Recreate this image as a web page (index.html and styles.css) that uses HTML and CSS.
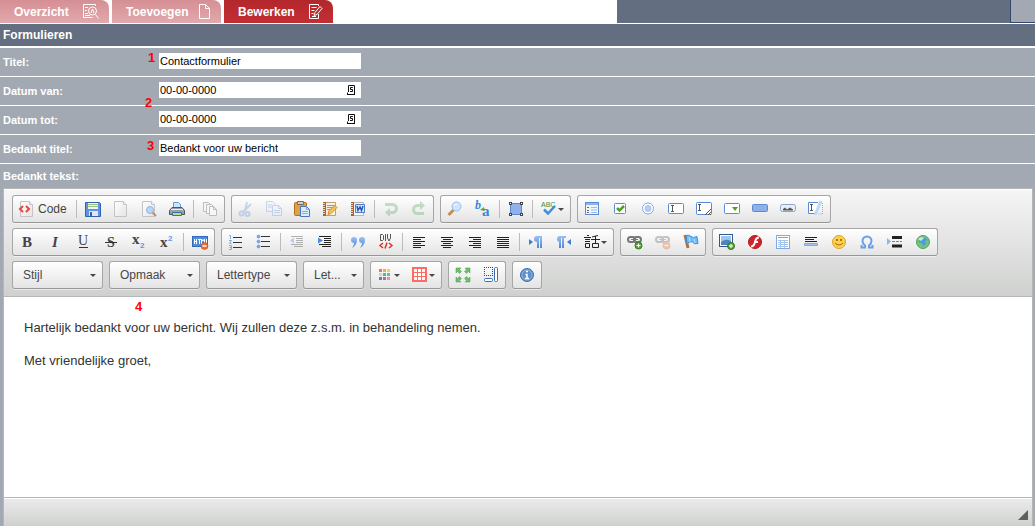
FILE: index.html
```html
<!DOCTYPE html>
<html lang="nl">
<head>
<meta charset="utf-8">
<title>Formulieren</title>
<link rel="stylesheet" href="styles.css">
</head>
<body>
<svg class="defs" aria-hidden="true">
  <defs>
    <linearGradient id="blue" x1="0" y1="0" x2="0" y2="1"><stop offset="0" stop-color="#9cc0f2"/><stop offset="1" stop-color="#4f86d9"/></linearGradient>
    <linearGradient id="paper" x1="0" y1="0" x2="1" y2="1"><stop offset="0" stop-color="#fff"/><stop offset="1" stop-color="#e4e4e4"/></linearGradient>
    <g id="sheet"><path d="M1.500.5h9l3 3v12h-12z" fill="url(#paper)" stroke="#c4c4c4"/><path d="M10.500.5v3h3" fill="#f4f4f4" stroke="#c4c4c4"/></g>
    <g id="chain" fill="none" stroke-width="2"><rect x="1" y="3" width="7" height="5" rx="2.500"/><rect x="7" y="3" width="7" height="5" rx="2.500"/><path d="M4 5.500h7" stroke-width="1"/></g>
  </defs>
</svg>

<header class="topbar">
  <nav class="tabs">
    <a class="tab" href="#overzicht">Overzicht
      <svg width="16" height="16" viewBox="0 0 16 16" fill="none" stroke="#fff"><path d="M12.500 2V.500h-12v13h9M2 3.500h3M2 6.500h2M2 9.500h3M2 11.500h5"/><circle cx="9.500" cy="7" r="4"/><path d="M8 9l1.500-4L11 9M12.500 10.500l3 4"/></svg>
    </a>
    <a class="tab" href="#toevoegen">Toevoegen
      <svg width="13" height="16" viewBox="0 0 13 16" fill="none" stroke="#fff"><path d="M1.500.5h6l4 4v10h-10zM7.500.5v4h4"/></svg>
    </a>
    <a class="tab active" href="#bewerken" aria-current="page">Bewerken
      <svg width="14" height="16" viewBox="0 0 14 16" fill="none" stroke="#fff"><path d="M9.500 2V.500h-9v14h9V10M2.500 3.500h5M2.500 6.500h3M2.500 9.500h2M5 11.500l1-3 5-6 2 2-5 6zM3 12.500h4"/></svg>
    </a>
  </nav>
  <div class="topfill"></div>
  <div class="topbox"></div>
</header>

<main>
  <h1 class="heading">Formulieren</h1>
  <div class="row">
    <label for="titel">Titel:</label>
    <div class="field"><input id="titel" type="text" value="Contactformulier"></div>
  </div>
  <div class="row">
    <label for="van">Datum van:</label>
    <div class="field"><input id="van" type="text" value="00-00-0000">
      <button class="cal" type="button" aria-label="Kies datum van"><svg width="9" height="10" viewBox="0 0 9 10" fill="none" stroke="#111"><path d="M1.500 7V.500h6v9M0 9.500h8M.5 7.500v2M5.800 2.500H3.500v2h2v2H3" /></svg></button></div>
  </div>
  <div class="row">
    <label for="tot">Datum tot:</label>
    <div class="field"><input id="tot" type="text" value="00-00-0000">
      <button class="cal" type="button" aria-label="Kies datum tot"><svg width="9" height="10" viewBox="0 0 9 10" fill="none" stroke="#111"><path d="M1.500 7V.500h6v9M0 9.500h8M.5 7.500v2M5.800 2.500H3.500v2h2v2H3" /></svg></button></div>
  </div>
  <div class="row">
    <label for="btitel">Bedankt titel:</label>
    <div class="field"><input id="btitel" type="text" value="Bedankt voor uw bericht"></div>
  </div>
  <div class="row last"><span id="btekst">Bedankt tekst:</span></div>

  <section class="editor-wrap">
    <div class="editor">
      <div class="toolbar" role="toolbar" aria-label="Werkbalk">
        <div class="line">
          <div class="group">
            <button class="tool code"><svg class="i" viewBox="0 0 16 16"><use href="#sheet"/><path d="M4 5L1 8l3 3M7 5l3 3-3 3" fill="none" stroke="#e8453c" stroke-width="2"/></svg>Code</button>
            <i class="sep"></i>
            <button class="tool" aria-label="Opslaan"><svg class="i" viewBox="0 0 16 16"><path d="M.5 1.500h14l1 1v13H.500z" fill="#5f93e0" stroke="#2f62b4"/><path d="M3 2h10v6H3z" fill="#eef4fc"/><path d="M3 3.500h10M3 5.500h10" stroke="#9cc47a"/><path d="M4 10h9v5H4z" fill="#e3e7ec"/><path d="M5 11h2v4H5z" fill="#2f62b4"/></svg></button>
            <button class="tool" aria-label="Nieuwe pagina"><svg class="i" viewBox="0 0 16 16"><use href="#sheet"/></svg></button>
            <button class="tool" aria-label="Voorbeeld"><svg class="i" viewBox="0 0 16 16"><use href="#sheet"/><circle cx="9" cy="9" r="3.500" fill="#b8d6f6" stroke="#8fb5e6"/><path d="M11.500 11.500L15 15" stroke="#c98f55" stroke-width="2"/></svg></button>
            <button class="tool" aria-label="Afdrukken"><svg class="i" viewBox="0 0 16 16"><path d="M4.500 7V1.500h5l2 2V7" fill="#cfe4fc" stroke="#5d9be0"/><path d="M3 6.500h10l2.500 3v4H.500v-4z" fill="#9aa1ab" stroke="#4d545e"/><path d="M2 8.500h12" stroke="#e9edf2"/><path d="M3.500 11.500h9v3h-9z" fill="#b9dc86" stroke="#3f6fa8"/></svg></button>
            <i class="sep"></i>
            <button class="tool" aria-label="Sjablonen"><svg class="i" viewBox="0 0 16 16" fill="#f7f7f7" stroke="#bdbdbd"><path d="M1.500 1.500h5l2 2v7h-7z"/><path d="M4.500 3.500h5l2 2v7h-7z"/><path d="M7.500 5.500h4l3 3v6h-7zM11.500 5.500v3h3"/></svg></button>
          </div>
          <div class="group">
            <button class="tool" aria-label="Knippen"><svg class="i faded" viewBox="0 0 16 16" fill="none" stroke="#6b9ad6" stroke-width="2"><path d="M9 1L7 10M13 3l-8 8"/><circle cx="3.500" cy="12.500" r="2"/><circle cx="9.500" cy="13" r="2"/></svg></button>
            <button class="tool" aria-label="Kopiëren"><svg class="i faded" viewBox="0 0 16 16" fill="#eaf2fd" stroke="#6b9ad6"><path d="M.5.5h6l3 3v7h-9z"/><path d="M6.500 4.500h6l3 3v7h-9zM12.500 4.500v3h3M2 4h4M2 6h4M8 9.500h6M8 11.500h6"/></svg></button>
            <button class="tool" aria-label="Plakken"><svg class="i" viewBox="0 0 16 16"><rect x=".5" y="1.500" width="12" height="13" rx="1" fill="#dda14a" stroke="#b0701f"/><path d="M3.500.5h6v3h-6z" fill="#cfcfcf" stroke="#8a6a3a"/><path d="M6.500 5.500h6l3 3v7h-9z" fill="#dcebfd" stroke="#4477bb"/><path d="M12.500 5.500v3h3M8 10.500h6M8 12.500h6" fill="none" stroke="#7facea"/></svg></button>
            <button class="tool" aria-label="Plakken als tekst"><svg class="i" viewBox="0 0 16 16"><path d="M2.500 1.500h11v13h-11z" fill="#f5f1e6" stroke="#c0a070"/><path d="M2.500 1v14" stroke="#a4603a" stroke-width="3"/><path d="M1 2.500h2M1 4.500h2M1 6.500h2M1 8.500h2M1 10.500h2M1 12.500h2" stroke="#ddd"/><path d="M5 4.500h7M5 6.500h7M5 8.500h3" stroke="#7c9dcf"/><path d="M6 13.500l1-4 6-5 2 2-6 6z" fill="#f7c552" stroke="#d18f2a"/></svg></button>
            <button class="tool" aria-label="Plakken vanuit Word"><svg class="i" viewBox="0 0 16 16"><path d="M2.500 1.500h11v13h-11z" fill="#f5f5f5" stroke="#b5b5b5"/><path d="M2.500 1v14" stroke="#a4603a" stroke-width="3"/><path d="M1 2.500h2M1 4.500h2M1 6.500h2M1 8.500h2M1 10.500h2M1 12.500h2" stroke="#ddd"/><path d="M5.500 3.500h9v8h-9z" fill="#dce8fa" stroke="#4f7fcf"/><path d="M7 5l1 4.500L10 6l1.500 3.500L13 5" fill="none" stroke="#2c58ae" stroke-width="1.500"/></svg></button>
            <i class="sep"></i>
            <button class="tool" aria-label="Ongedaan maken"><svg class="i faded" viewBox="0 0 16 16" fill="none" stroke="#63ad66" stroke-width="3"><path d="M2 3.500h7.500a4 4 0 0 1 0 8H6"/><path d="M7 7v9l-5-4.500z" fill="#63ad66" stroke="none"/></svg></button>
            <button class="tool" aria-label="Opnieuw"><svg class="i faded" viewBox="0 0 16 16" fill="none" stroke="#63ad66" stroke-width="3"><path d="M10 4.500H6.500a4 4 0 0 0 0 8H13"/><path d="M9 0v9l5-4.500z" fill="#63ad66" stroke="none"/></svg></button>
          </div>
          <div class="group">
            <button class="tool" aria-label="Zoeken"><svg class="i" viewBox="0 0 16 16"><path d="M6.500 9L1.500 14" stroke="#c98d4c" stroke-width="3"/><circle cx="9.500" cy="5.500" r="4.500" fill="#cfe5fb" stroke="#9abde8"/><path d="M7 5q1-2 3-2" stroke="#fff" fill="none"/></svg></button>
            <button class="tool" aria-label="Vervangen"><svg class="i" viewBox="0 0 16 16"><text x="0" y="8" class="serif b it sky" font-size="12">b</text><text x="7" y="15" class="serif b sky" font-size="15">a</text><path d="M5 9l4-3 1 4z" fill="#58a93f"/></svg></button>
            <i class="sep"></i>
            <button class="tool" aria-label="Alles selecteren"><svg class="i" viewBox="0 0 16 16"><path d="M2.500 2.500h11v11h-11z" fill="#8fb2ea" stroke="#5d88cc"/><path d="M1 1h3v3H1zM12 1h3v3h-3zM1 12h3v3H1zM12 12h3v3h-3z" fill="#444"/><path d="M2 2h1v1H2zM13 2h1v1h-1zM2 13h1v1H2zM13 13h1v1h-1z" fill="#fff"/></svg></button>
            <i class="sep"></i>
            <button class="tool arrow" aria-label="Spellingscontrole"><svg class="i" viewBox="0 0 16 16"><text x="0" y="6" class="sans leaf" font-size="7">ABC</text><path d="M3 8.500l4 4 7-7.500" fill="none" stroke="#3b8fdd" stroke-width="2.500"/></svg></button>
          </div>
          <div class="group">
            <button class="tool" aria-label="Formulier"><svg class="i" viewBox="0 0 16 16"><rect x="1.500" y="1.500" width="13" height="12" fill="#eff5fd" stroke="#5b8dd6"/><path d="M2 3h12" stroke="#8fb4ea" stroke-width="2"/><path d="M3 6.500h2M3 9.500h2M3 11.500h2" stroke="#667"/><path d="M7 6.500h6M7 9h6M7 11.500h6" stroke="#9dbbe8"/></svg></button>
            <button class="tool" aria-label="Selectievakje"><svg class="i" viewBox="0 0 16 16"><rect x="2.500" y="2.500" width="11" height="10" rx="1" fill="#fff" stroke="#5b8dd6"/><path d="M5 7l2.500 2.500L12 5" fill="none" stroke="#4fa02b" stroke-width="2.500"/></svg></button>
            <button class="tool" aria-label="Keuzerondje"><svg class="i" viewBox="0 0 16 16"><circle cx="8" cy="7.500" r="5.500" fill="#fff" stroke="#7fa9e3"/><circle cx="8" cy="7.500" r="3" fill="#b5cdf2" stroke="#a3c0ef"/></svg></button>
            <button class="tool" aria-label="Tekstveld"><svg class="i" viewBox="0 0 16 16"><rect x=".5" y="2.500" width="15" height="10" rx="1" fill="#fff" stroke="#5b8dd6"/><path d="M3 4.500h3M3 10.500h3M4.500 4v7" stroke="#555"/></svg></button>
            <button class="tool" aria-label="Tekstvak"><svg class="i" viewBox="0 0 16 16"><rect x=".5" y="1.500" width="15" height="12" rx="1" fill="#fff" stroke="#5b8dd6"/><path d="M2 3.500h3M2 9.500h3M3.500 3v7" stroke="#555"/><path d="M9 14l6-6M12 14l3-3M14 14l1-1" stroke="#555"/></svg></button>
            <button class="tool" aria-label="Selectieveld"><svg class="i" viewBox="0 0 16 16"><rect x=".5" y="2.500" width="15" height="10" rx="1" fill="#fff" stroke="#5b8dd6"/><path d="M8 6h6l-3 4z" fill="#4fa02b"/></svg></button>
            <button class="tool" aria-label="Knop"><svg class="i" viewBox="0 0 16 16"><rect x=".5" y="3.500" width="15" height="7" rx="1" fill="#8db0e6" stroke="#5b8dd6"/></svg></button>
            <button class="tool" aria-label="Afbeeldingsknop"><svg class="i" viewBox="0 0 16 16"><rect x=".5" y="3.500" width="15" height="7" rx="2" fill="#e8eef6" stroke="#8ba6cc"/><path d="M3 9.500V8l2-1.500 2 2 3-2 3 2v1z" fill="#555"/></svg></button>
            <button class="tool" aria-label="Verborgen veld"><svg class="i" viewBox="0 0 16 16"><path d="M10 1.500H.500v11H8" fill="#fff" stroke="#5b8dd6"/><path d="M2 3.500h3M2 9.500h3M3.500 3v7" stroke="#555"/><path d="M7 14L13 0" stroke="#b9d8fa" stroke-width="3"/><path d="M14.500 2v11H10" fill="none" stroke="#aaa" stroke-dasharray="1 1"/></svg></button>
          </div>
        </div>

        <div class="line">
          <div class="group">
            <button class="tool" aria-label="Vet"><svg class="i" viewBox="0 0 16 16"><text x="3" y="13" class="serif b" font-size="15">B</text></svg></button>
            <button class="tool" aria-label="Cursief"><svg class="i" viewBox="0 0 16 16"><text x="5" y="13" class="serif b it" font-size="15">I</text></svg></button>
            <button class="tool" aria-label="Onderstreept"><svg class="i" viewBox="0 0 16 16"><text x="3" y="11" class="serif" font-size="14">U</text><path d="M4 13.500h9" stroke="#333"/></svg></button>
            <button class="tool" aria-label="Doorhalen"><svg class="i" viewBox="0 0 16 16"><text x="4" y="13" class="serif b" font-size="14">S</text><path d="M2 8.500h12" stroke="#333"/></svg></button>
            <button class="tool" aria-label="Subscript"><svg class="i" viewBox="0 0 16 16"><text x="1" y="10" class="serif b" font-size="15">x</text><text x="9" y="14" class="sans b azure" font-size="8">2</text></svg></button>
            <button class="tool" aria-label="Superscript"><svg class="i" viewBox="0 0 16 16"><text x="1" y="13" class="serif b" font-size="15">x</text><text x="9" y="7" class="sans b azure" font-size="8">2</text></svg></button>
            <i class="sep"></i>
            <button class="tool" aria-label="HTML opschonen"><svg class="i" viewBox="0 0 16 16"><rect x=".5" y="2.500" width="15" height="10" fill="#4f8ddd" stroke="#3468b4"/><path d="M2.500 5v5M4.500 5v5M2.500 7.500h2M6 5.500h3M7.500 5v5M9.500 10V5l1.500 2 1.500-2v5M14.500 5v5" fill="none" stroke="#fff"/><circle cx="12.500" cy="12" r="3.500" fill="#ed6d2b" stroke="#b6451a" stroke-width=".5"/><path d="M10.500 12h4" stroke="#fff" stroke-width="1.500"/></svg></button>
          </div>
          <div class="group">
            <button class="tool" aria-label="Genummerde lijst"><svg class="i" viewBox="0 0 16 16"><path d="M5 3.500h9M5 8.500h9M5 13.500h9" stroke="#333"/><path d="M1 1.500h1.500V5M1 6.500h2.500L1.500 9.500h2M1 11.500h2.500v4H1M1.500 13.500h2" stroke="#7faaea" fill="none"/></svg></button>
            <button class="tool" aria-label="Opsomming"><svg class="i" viewBox="0 0 16 16"><path d="M5 2.500h9M5 7.500h9M5 12.500h9" stroke="#333"/><g fill="#7da9ea" stroke="#4f82d0" stroke-width=".5"><circle cx="2.500" cy="2.500" r="1.500"/><circle cx="2.500" cy="7.500" r="1.500"/><circle cx="2.500" cy="12.500" r="1.500"/></g></svg></button>
            <i class="sep"></i>
            <button class="tool" aria-label="Inspringing verkleinen"><svg class="i faded" viewBox="0 0 16 16"><path d="M2 2.500h12M7 4.500h7M7 6.500h7M7 8.500h7M2 10.500h12M5 12.500h9" stroke="#333"/><path d="M5 3.500v6L1 6.500z" fill="#4a8be0"/></svg></button>
            <button class="tool" aria-label="Inspringing vergroten"><svg class="i" viewBox="0 0 16 16"><path d="M2 2.500h12M7 4.500h7M7 6.500h7M7 8.500h7M2 10.500h12M5 12.500h9" stroke="#222"/><path d="M1 3.500v6l5-3z" fill="#4a8be0"/></svg></button>
            <i class="sep"></i>
            <button class="tool" aria-label="Citaatblok"><svg class="i" viewBox="0 0 16 16" fill="url(#blue)"><path d="M4 3a3 3 0 0 1 3 3c0 4-2 6-5 8 1-2 2-3 2-5a3 3 0 0 1 0-6z"/><path d="M12 3a3 3 0 0 1 3 3c0 4-2 6-5 8 1-2 2-3 2-5a3 3 0 0 1 0-6z"/></svg></button>
            <button class="tool" aria-label="DIV aanmaken"><svg class="i" viewBox="0 0 16 16" fill="none"><path d="M2.500.5v6h2l1-1v-4l-1-1zM7.500 0v7M9.500 0v4l1.500 3 1.500-3V0" stroke="#555"/><path d="M5 9l-3 2.500L5 14M11 9l3 2.500-3 2.500M9 8.500l-2 6" stroke="#df3326" stroke-width="1.500"/></svg></button>
            <i class="sep"></i>
            <button class="tool" aria-label="Links uitlijnen"><svg class="i" viewBox="0 0 16 16" stroke="#222"><path d="M2 3.500h12M2 5.500h8M2 7.500h12M2 9.500h8M2 11.500h12M2 13.500h8"/></svg></button>
            <button class="tool" aria-label="Centreren"><svg class="i" viewBox="0 0 16 16" stroke="#222"><path d="M2 3.500h12M4 5.500h8M2 7.500h12M4 9.500h8M2 11.500h12M4 13.500h8"/></svg></button>
            <button class="tool" aria-label="Rechts uitlijnen"><svg class="i" viewBox="0 0 16 16" stroke="#222"><path d="M2 3.500h12M6 5.500h8M2 7.500h12M6 9.500h8M2 11.500h12M6 13.500h8"/></svg></button>
            <button class="tool" aria-label="Uitvullen"><svg class="i" viewBox="0 0 16 16" stroke="#222"><path d="M2 3.500h12M2 5.500h12M2 7.500h12M2 9.500h12M2 11.500h12M2 13.500h12"/></svg></button>
            <i class="sep"></i>
            <button class="tool" aria-label="Links naar rechts"><svg class="i" viewBox="0 0 16 16"><path d="M1 5v6l4-3z" fill="#3f7cd2"/><path d="M9 8a3 3 0 0 1 0-6h5v12h-2V4h-1v10H9z" fill="url(#blue)"/></svg></button>
            <button class="tool" aria-label="Rechts naar links"><svg class="i" viewBox="0 0 16 16"><path d="M15 5v6l-4-3z" fill="#3f7cd2"/><path d="M4 8a3 3 0 0 1 0-6h6v2H8v10H6V4H5v10H3V8z" fill="url(#blue)"/></svg></button>
            <button class="tool arrow" aria-label="Taal"><svg class="i" viewBox="0 0 16 16"><path d="M3 1.500h2M0 3.500h7M1 5.500h5M1 7.500h5M1.500 9.500h4v4h-4zM14 1.500L8 3M7 5.500h9M11.500 2v7M8.500 9.500h6v4h-6z" fill="none" stroke="#222"/></svg></button>
          </div>
          <div class="group">
            <button class="tool" aria-label="Link"><svg class="i" viewBox="0 0 16 16"><use href="#chain" stroke="#777"/><circle cx="11.500" cy="11.500" r="3.500" fill="#58a63b" stroke="#34781d"/><path d="M11.500 9.500v4M9.500 11.500h4" stroke="#fff"/></svg></button>
            <button class="tool" aria-label="Link verwijderen"><svg class="i faded" viewBox="0 0 16 16"><use href="#chain" stroke="#666"/><circle cx="11.500" cy="11.500" r="3.500" fill="#ed7b45" stroke="#d2602d"/><path d="M9.500 11.500h4" stroke="#fff"/></svg></button>
            <button class="tool" aria-label="Anker"><svg class="i" viewBox="0 0 16 16"><path d="M2 1l3 13" stroke="#b0713a" stroke-width="3"/><path d="M3 1.500q3-1 5 1t6 0l1 7q-4 1-5-1t-6 1z" fill="#6fbdf5" stroke="#3d90d8"/><path d="M6 3l1 5M11 5l1 4" stroke="#b8e0fb"/></svg></button>
          </div>
          <div class="group">
            <button class="tool" aria-label="Afbeelding"><svg class="i" viewBox="0 0 16 16"><rect x=".5" y=".5" width="13" height="12" fill="#fff" stroke="#34598f"/><path d="M2 2h10v9H2z" fill="#9cc7f2"/><path d="M2 8q5-4 10-1v4H2z" fill="#4e86bb"/><circle cx="12" cy="12" r="3.500" fill="#58a63b" stroke="#34781d"/><path d="M12 10v4M10 12h4" stroke="#fff"/></svg></button>
            <button class="tool" aria-label="Flash"><svg class="i" viewBox="0 0 16 16"><circle cx="8" cy="8" r="6.500" fill="#cf2229" stroke="#b3181e"/><path d="M12 3.500Q9 3.500 8 8t-4 4.500M7 8h4" fill="none" stroke="#fff" stroke-width="2"/></svg></button>
            <button class="tool" aria-label="Tabel"><svg class="i" viewBox="0 0 16 16"><rect x="1.500" y="1.500" width="13" height="13" fill="#fff" stroke="#7fa9e3"/><path d="M3 3.500h10" stroke="#73b56f"/><path d="M3 6.500h10M3 8.500h10M3 10.500h10M3 12.500h10M5.500 6v8M9.500 6v8" stroke="#a7c4ea"/></svg></button>
            <button class="tool" aria-label="Horizontale lijn"><svg class="i" viewBox="0 0 16 16"><path d="M2 3.500h12M2 5.500h9M2 7.500h12" stroke="#222"/><path d="M1.500 9.500h13v2h-13z" fill="#a7c4f2" stroke="#7fa9e8"/></svg></button>
            <button class="tool" aria-label="Smiley"><svg class="i" viewBox="0 0 16 16"><circle cx="8" cy="8" r="6.500" fill="#fcd24b" stroke="#dfa229"/><path d="M6 5v2M10 5v2" stroke="#8a5a0b" stroke-width="1.500"/><path d="M4 9q4 4 8 0" fill="none" stroke="#a66d10"/></svg></button>
            <button class="tool" aria-label="Speciaal teken"><svg class="i" viewBox="0 0 16 16"><path d="M2.500 11v2.500H6V11.500C4 10 3.500 8.500 3.500 7a4.500 4.500 0 0 1 9 0c0 1.500-.5 3-2.500 4.500v2h3.500V11" fill="none" stroke="#6c9fe8" stroke-width="2"/></svg></button>
            <button class="tool" aria-label="Pagina-einde"><svg class="i" viewBox="0 0 16 16"><path d="M0 4v7l4-3.500z" fill="#8db4ee"/><path d="M5 3.500h10M5 12h10" stroke="#222" stroke-width="3"/><path d="M5 7.500h10" stroke="#4a8be0" stroke-dasharray="3 1"/></svg></button>
            <button class="tool" aria-label="IFrame"><svg class="i" viewBox="0 0 16 16"><circle cx="8" cy="8" r="6.500" fill="#72c47c" stroke="#5b9d66"/><path d="M6 4q5-1 7 2l-3 1 1 3-3 2-1-3-4-1z" fill="#4a9de0"/><path d="M3 5q3-3 6-1L6 7z" fill="#c8edc4"/></svg></button>
          </div>
        </div>

        <div class="line">
          <div class="combo"><select aria-label="Stijl"><option>Stijl</option></select></div>
          <div class="combo"><select aria-label="Opmaak"><option>Opmaak</option></select></div>
          <div class="combo"><select aria-label="Lettertype"><option>Lettertype</option></select></div>
          <div class="combo small"><select aria-label="Lettergrootte"><option>Let...</option></select></div>
          <div class="group">
            <button class="tool arrow" aria-label="Tekstkleur"><svg class="i" viewBox="0 0 16 16"><path d="M2 2h3v3H2z" fill="#ff6b61"/><path d="M6 2h3v3H6z" fill="#f3a963"/><path d="M10 2h3v3h-3z" fill="#f4cf58"/><path d="M2 6h3v3H2z" fill="#c7dfa5"/><path d="M6 6h3v3H6z" fill="#45c468"/><path d="M10 6h3v3h-3z" fill="#62b7ce"/><path d="M2 10h3v3H2z" fill="#5d82bd"/><path d="M6 10h3v3H6z" fill="#9e72b5"/><path d="M10 10h3v3h-3z" fill="#ff83a5"/></svg></button>
            <button class="tool arrow" aria-label="Achtergrondkleur"><svg class="i" viewBox="0 0 16 16"><path d="M0 0h15v15H0z" fill="#ff6b61"/><path d="M2 2h3v3H2zM6 2h3v3H6zM10 2h3v3h-3zM2 6h3v3H2zM6 6h3v3H6zM10 6h3v3h-3zM2 10h3v3H2zM6 10h3v3H6zM10 10h3v3h-3z" fill="#fff"/></svg></button>
          </div>
          <div class="group">
            <button class="tool" aria-label="Maximaliseren"><svg class="i" viewBox="0 0 16 16" fill="#6cc06a" stroke="#4a9a4c" stroke-width=".5"><path d="M1 1h5L4.500 2.500l2 2-2 2-2-2L1 6zM15 1h-5l1.500 1.500-2 2 2 2 2-2L15 6zM1 15h5l-1.500-1.500 2-2-2-2-2 2L1 10zM15 15h-5l1.500-1.500-2-2 2-2 2 2L15 10z"/></svg></button>
            <button class="tool" aria-label="Toon blokken"><svg class="i" viewBox="0 0 16 16" fill="none"><path d="M1 .5h9M1 8.500h9M1.500 0v9M9.500 0v9" stroke="#444" stroke-dasharray="1 1"/><rect x="1.500" y="11.500" width="8" height="3" rx="1" fill="#fff" stroke="#3a6fb5"/><rect x="11.500" y=".5" width="3" height="14" rx="1" fill="#fff" stroke="#3a6fb5"/></svg></button>
          </div>
          <div class="group">
            <button class="tool" aria-label="Over"><svg class="i" viewBox="0 0 16 16"><circle cx="8" cy="8" r="6.500" fill="#5c8fcb" stroke="#4470a8"/><circle cx="8" cy="8" r="5" fill="none" stroke="#a5c4e8" stroke-width=".7"/><path d="M7 4.500h2M6.500 7.500H8V11M6 11.500h4" stroke="#fff" stroke-width="1.500" fill="none"/></svg></button>
          </div>
        </div>
      </div>

      <div class="content" contenteditable="true" role="textbox" aria-multiline="true" aria-labelledby="btekst" spellcheck="false">
        <p>Hartelijk bedankt voor uw bericht. Wij zullen deze z.s.m. in behandeling nemen.</p>
        <p>Met vriendelijke groet,</p>
      </div>

      <div class="bottom"><svg width="10" height="10" viewBox="0 0 10 10"><path d="M10 0v10H0z" fill="#5f5f5f"/></svg></div>
    </div>
  </section>
</main>

<span class="note n1">1</span>
<span class="note n2">2</span>
<span class="note n3">3</span>
<span class="note n4">4</span>
</body>
</html>
```

FILE: styles.css
```css
* { box-sizing: border-box; }

body {
  position: relative;
  margin: 0;
  background: #a3a9b3;
  color: #fff;
  font: 11px/14px "Liberation Sans", Arial, sans-serif;
}

button, input, select { font: inherit; color: inherit; }

.defs { position: absolute; width: 0; height: 0; }

/* top bar */
.topbar {
  display: flex;
  height: 24px;
  background: #fff;
  border-bottom: 1px solid #fff;
}

.tabs {
  display: flex;
  gap: 3px;
  width: 617px;
}

.tab {
  display: flex;
  align-items: center;
  justify-content: space-between;
  width: 109px;
  padding: 0 10px 0 14px;
  border-top-right-radius: 8px;
  background: linear-gradient(#d58f94, #e2a9ac);
  color: #fff;
  font-size: 12px;
  font-weight: bold;
  text-decoration: none;
}

.tab.active { background: linear-gradient(#b3272c, #c22f33); }

.topfill {
  flex: 1;
  background: #636e80;
}

.topbox {
  width: 25px;
  border: solid #36466f;
  border-width: 0 0 1px 1px;
  background: #a3a9b3;
}

/* form */
.heading {
  margin: 0;
  padding: 0 3px;
  background: #636e80;
  border-bottom: 2px solid #fff;
  font-size: 12px;
  line-height: 22px;
}

.row {
  display: flex;
  align-items: center;
  min-height: 29px;
  padding-left: 3px;
  border-bottom: 1px solid #fff;
  font-weight: bold;
}

.row label { width: 156px; }

.row.last {
  min-height: 24px;
  border-bottom: 0;
}

.field {
  display: flex;
  align-items: center;
  width: 202px;
  height: 16px;
  margin-bottom: 2px;
  padding-right: 5px;
  background: #fff;
  font-weight: normal;
}

.field input {
  flex: 1;
  min-width: 0;
  height: 16px;
  padding: 0 1px;
  border: 0;
  background: none;
  color: #000;
}

.cal {
  display: flex;
  padding: 0;
  border: 0;
  background: none;
}

/* editor */
.editor-wrap { padding: 0 2px 0 3px; }

.editor {
  border: 1px solid #b6b6b6;
  border-bottom: 0;
  color: #333;
}

.toolbar {
  display: flex;
  flex-direction: column;
  gap: 5px;
  padding: 5px 8px 7px;
  border-top: 1px solid #fff;
  border-bottom: 1px solid #b6b6b6;
  background: linear-gradient(#f5f5f5, #cfd1cf);
}

.line {
  display: flex;
  flex-wrap: wrap;
  gap: 6px;
}

.group, .combo {
  display: flex;
  height: 28px;
  border: 1px solid #a6a6a6;
  border-bottom-color: #979797;
  border-radius: 3px;
  background: linear-gradient(#fff, #e4e4e4);
  box-shadow: 0 1px 0 rgba(255, 255, 255, 0.5);
}

.tool {
  display: flex;
  align-items: center;
  padding: 0 6px;
  border: 0;
  background: none;
}

.code {
  gap: 3px;
  width: 61px;
  color: #444;
  font-size: 12px;
}

.i {
  flex: none;
  width: 16px;
  height: 16px;
  overflow: visible;
}

.i text { fill: #444; }
.i .sky { fill: #3b86dc; }
.i .azure { fill: #5c98e8; }
.i .leaf { fill: #3d8b43; }
.serif { font-family: "Liberation Serif", "Times New Roman", serif; }
.sans { font-family: "Liberation Sans", Arial, sans-serif; }
.b { font-weight: bold; }
.it { font-style: italic; }
.faded { opacity: 0.35; }

.sep {
  width: 1px;
  height: 18px;
  margin: 4px 2px 0;
  background: #bcbcbc;
}

.arrow::after, .combo::after {
  content: "";
  border: 3px solid transparent;
  border-top-color: #474747;
  border-bottom: 0;
}

.arrow::after { margin-left: 1px; }

.combo {
  display: grid;
  align-items: center;
  width: 91px;
}

.combo.small { width: 61px; }

.combo select {
  grid-area: 1 / 1;
  width: 100%;
  height: 26px;
  padding: 0 10px;
  border: 0;
  background: none;
  color: #474747;
  font-size: 12px;
  appearance: none;
}

.combo::after {
  grid-area: 1 / 1;
  justify-self: end;
  margin-right: 6px;
  pointer-events: none;
}

.content {
  min-height: 200px;
  padding: 21px 20px 20px;
  background: #fff;
  font-size: 13px;
  line-height: 20px;
  outline: 0;
}

.content p { margin: 0 0 13px; }

.bottom {
  display: flex;
  align-items: flex-end;
  justify-content: flex-end;
  height: 29px;
  padding: 0 4px 6px;
  border-top: 1px solid #b6b6b6;
  background: linear-gradient(#ebebeb, #cfd1cf);
  box-shadow: inset 0 1px 0 #fff;
}

/* numbered markers over the form */
.note {
  position: absolute;
  color: #f00;
  font-size: 13px;
  font-weight: bold;
}

.n1 { left: 148px; top: 51px; }
.n2 { left: 145px; top: 96px; }
.n3 { left: 147px; top: 139px; }
.n4 { left: 135px; top: 300px; }
```
